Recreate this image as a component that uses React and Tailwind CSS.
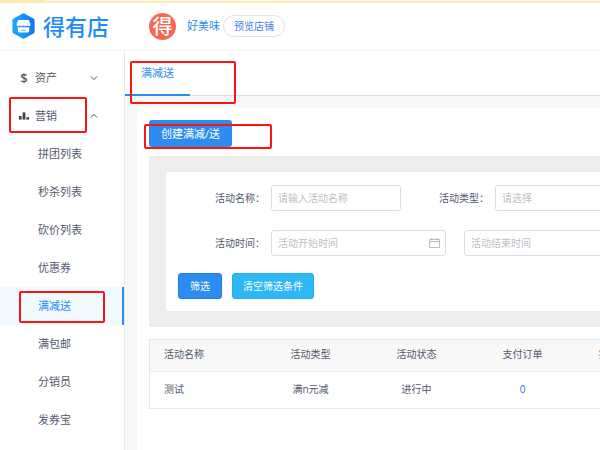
import React, { useState } from 'react';

const menu = ['拼团列表', '秒杀列表', '砍价列表', '优惠券', '满减送', '满包邮', '分销员', '发券宝'];

const columns = ['活动名称', '活动类型', '活动状态', '支付订单', '实付金额(元)', '操作'];

const rows = [
  { name: '测试', type: '满n元减', status: '进行中', orders: 0, amount: '0.00' }
];

const Logo = () => (
  <svg className="w-[23px] h-[26px]" viewBox="0 0 23 26" aria-hidden="true">
    <defs>
      <linearGradient id="hex" x1="0" y1="0" x2="1" y2="0">
        <stop offset="0" stopColor="#1fa5ff" />
        <stop offset="0.5" stopColor="#1a94fb" />
        <stop offset="1" stopColor="#1173f2" />
      </linearGradient>
    </defs>
    <path d="M10.2 0.7 Q11.5 0 12.8 0.7 L21.4 5.6 Q22.6 6.3 22.6 7.6 V18.400 Q22.6 19.7 21.4 20.4 L12.8 25.3 Q11.5 26 10.2 25.3 L1.6 20.4 Q0.4 19.7 0.4 18.400 V7.6 Q0.4 6.3 1.6 5.6 Z" fill="url(#hex)" />
    <path d="M7 7 H16 Q16.8 7 17.1 7.7 L18.4 11 Q18.6 13.2 16.9 13.2 Q15.7 13.2 15.1 12.2 Q14.500 13.2 13.3 13.2 Q12.1 13.2 11.5 12.2 Q10.9 13.2 9.7 13.2 Q8.500 13.2 7.9 12.2 Q7.300 13.2 6.1 13.2 Q4.400 13.2 4.600 11 L5.900 7.700 Q6.200 7 7 7 Z" fill="#fff" />
    <path d="M5.800 14.200 H17.200 V18 Q17.200 19.400 15.800 19.400 H7.200 Q5.800 19.400 5.800 18 Z" fill="#fff" />
    <path d="M9.200 17.300 H13.800" stroke="#5bb2fb" strokeWidth="1" />
  </svg>
);

const Avatar = () => (
  <svg className="w-[27px] h-[27px]" viewBox="0 0 27 27" aria-hidden="true">
    <circle cx="13.5" cy="13.5" r="13.5" fill="#fb6650" />
    <text x="13.5" y="21" textAnchor="middle" fontSize="20" fontWeight="500" fill="#fff">得</text>
  </svg>
);

const BarsIcon = () => (
  <svg className="w-[10px] h-[8px]" viewBox="0 0 10 8" fill="#3c4353" aria-hidden="true">
    <rect x="0" y="4" width="2.6" height="3.6" />
    <rect x="3.6" y="0.4" width="2.8" height="7.2" />
    <rect x="7.4" y="5.2" width="2.6" height="2.4" />
  </svg>
);

const Chevron = ({ up }) => (
  <svg className="w-[8px] h-[8px]" viewBox="0 0 8 8" fill="none" stroke="#4a5263" strokeWidth="1" aria-hidden="true">
    <path d={up ? 'M0.800 5.600 L4 2.400 L7.200 5.600' : 'M0.800 2.400 L4 5.600 L7.200 2.400'} />
  </svg>
);

const CalendarIcon = () => (
  <svg className="absolute right-[6px] top-[8px] w-[11px] h-[11px]" viewBox="0 0 11 11" fill="none" stroke="#a9afba" aria-hidden="true">
    <path d="M0.500 1.500 H10.500 V9.500 H0.500 Z M0.500 3.500 H10.500" strokeWidth="0.800" />
    <path d="M2.800 0 V2.200 M8.200 0 V2.200" strokeWidth="1" />
  </svg>
);

// red frame laid over a step the reader has to follow
const Mark = ({ className }) => (
  <span className={`absolute z-10 border-2 border-[#fd1310] rounded-[2px] pointer-events-none ${className}`} />
);

const field = 'block h-[26px] w-full rounded-[3px] border border-[#dcdee2] bg-white px-[6px] text-[10px] text-[#515a6e] placeholder:text-[#bcc0c8] outline-none focus:border-[#2d8cf0]';

const Sidebar = ({ active, onSelect }) => {
  const [open, setOpen] = useState(true);

  return (
    <nav className="w-[125px] shrink-0 border-r border-[#e6e8eb] bg-white pt-2 text-[11px]">
      <button type="button" className="flex h-[38px] w-full items-center pl-[19px] pr-[26px]">
        <span className="w-[10px] text-center text-[13px] font-semibold">$</span>
        <span className="ml-[6px] flex-1 text-left">资产</span>
        <Chevron />
      </button>
      <button
        type="button"
        aria-expanded={open}
        onClick={() => setOpen(!open)}
        className="relative flex h-[38px] w-full items-center pl-[19px] pr-[26px]"
      >
        <BarsIcon />
        <span className="ml-[6px] flex-1 text-left">营销</span>
        <Chevron up={open} />
        <Mark className="left-[9px] right-[37px] top-0 bottom-[2px]" />
      </button>
      {
        open && (
          <ul>
            {menu.map((item) => (
              <li key={item}>
                <a
                  href="#"
                  onClick={() => onSelect(item)}
                  className={
                    item === active
                      ? 'relative flex h-[38px] items-center border-r-2 border-[#2d8cf0] bg-[#f0faff] pl-[38px] text-[#2d8cf0]'
                      : 'flex h-[38px] items-center pl-[38px]'
                  }
                >
                  {item}
                  {item === active && <Mark className="left-[19px] right-[17px] top-1 bottom-[2px]" />}
                </a>
              </li>
            ))}
          </ul>
        )
      }
    </nav>
  );
};

const Filters = () => {
  const empty = { name: '', type: '', start: '', end: '' };
  const [input, setInput] = useState(empty);

  const changeHandler = (e) => {
    setInput({ ...input, [e.target.name]: e.target.value });
  };

  return (
    <div className="mt-[9px] bg-[#ededed] py-4 pl-[17px]">
      <form
        onSubmit={(e) => e.preventDefault()}
        className="rounded-[3px] bg-white pb-3 pl-3 pt-[13px] text-[10px]"
      >
        <div className="flex items-center">
          <label htmlFor="name" className="w-[93px] pr-[6px] text-right">活动名称：</label>
          <div className="w-[130px]">
            <input id="name" name="name" placeholder="请输入活动名称" value={input.name} onChange={changeHandler} className={field} />
          </div>
          <label htmlFor="type" className="w-[94px] pr-[6px] text-right">活动类型：</label>
          <div className="w-[175px]">
            <select id="type" name="type" value={input.type} onChange={changeHandler} className={`${field} appearance-none text-[#bcc0c8]`}>
              <option value="">请选择</option>
              <option value="n">满n元减</option>
            </select>
          </div>
        </div>

        <div className="mt-[19px] flex items-center">
          <label htmlFor="start" className="w-[93px] pr-[6px] text-right">活动时间：</label>
          <div className="relative w-[175px]">
            <input id="start" name="start" placeholder="活动开始时间" value={input.start} onChange={changeHandler} className={field} />
            <CalendarIcon />
          </div>
          <div className="relative ml-[18px] w-[175px]">
            <input name="end" aria-label="活动结束时间" placeholder="活动结束时间" value={input.end} onChange={changeHandler} className={field} />
            <CalendarIcon />
          </div>
        </div>

        <div className="mt-[17px] flex gap-[10px] text-white">
          <button type="submit" className="h-[26px] rounded-[3px] border border-[#1c7deb] bg-[#2d8cf0] px-[11px]">筛选</button>
          <button type="button" onClick={() => setInput(empty)} className="h-[26px] rounded-[3px] border border-[#22adf0] bg-[#2db7f5] px-[10px]">清空筛选条件</button>
        </div>
      </form>
    </div>
  );
};

const ActivityTable = () => (
  <table className="mt-3 w-full table-fixed border-collapse border border-[#e4e6ea] text-center text-[10px]">
    <colgroup>
      <col className="w-[108px]" />
      <col className="w-[106px]" />
      <col className="w-[106px]" />
      <col className="w-[106px]" />
      <col className="w-[102px]" />
      <col />
    </colgroup>
    <thead>
      <tr className="h-8 border-b border-[#e8eaec] bg-[#f8f8f9]">
        {columns.map((title) => (
          <th key={title} className="pb-[3px] font-normal first:pl-[14px] first:text-left">{title}</th>
        ))}
      </tr>
    </thead>
    <tbody>
      {rows.map((row) => (
        <tr key={row.name} className="h-[37px] *:pb-[3px]">
          <td className="pl-[14px] text-left">{row.name}</td>
          <td>{row.type}</td>
          <td>{row.status}</td>
          <td><a href="#" className="text-[#2d6cf0]">{row.orders}</a></td>
          <td>{row.amount}</td>
          <td><a href="#" className="text-[#2d6cf0]">编辑</a></td>
        </tr>
      ))}
    </tbody>
  </table>
);

const App = () => {
  const [active, setActive] = useState('满减送');

  return (
    <div className="flex min-h-screen flex-col overflow-hidden bg-white font-['Open_Sans','Noto_Sans_CJK_SC',sans-serif] leading-4 text-[#515a6e]">
      <div className="h-[3px] border-b-2 border-[#fdeebe] bg-[#fffbe0]">
        <div className="h-[3px] w-[45px] bg-[#fbe9ad]" />
      </div>

      <header className="flex h-12 items-center border-b-2 border-[#f8f8f9] pl-3">
        <Logo />
        <h1 className="ml-2 text-[22px] font-medium leading-6 text-[#1b8dfa]">得有店</h1>
        <div className="ml-10 flex items-center">
          <Avatar />
          <span className="ml-[11px] text-[11px] text-[#2d8cf0]">好美味</span>
          <button type="button" className="ml-[3px] h-[22px] rounded-full border border-[#dfe3ea] px-[10px] text-[10px] text-[#3f83ea]">预览店铺</button>
        </div>
      </header>

      <div className="flex flex-1">
        <Sidebar active={active} onSelect={setActive} />

        <main className="flex min-w-0 flex-1 flex-col overflow-hidden bg-[#f5f7f9]">
          <div className="relative flex h-[45px] border-b border-[#dcdee2] bg-white">
            <a href="#" className="h-[45px] border-b-2 border-[#2d8cf0] px-4 pt-[14px] text-[11px] text-[#2d8cf0]">{active}</a>
            <Mark className="left-[5px] top-[10px] h-[43px] w-[106px]" />
          </div>

          <section className="ml-3 mt-3 min-w-[760px] flex-1 rounded-tl-[4px] bg-white pl-3 pt-3">
            <div className="relative">
              <button type="button" className="block h-[27px] rounded-[3px] bg-[#2d8cf0] px-3 text-[11px] text-white">创建满减/送</button>
              <Mark className="-left-[5px] top-1 h-[25px] w-[128px]" />
            </div>
            <Filters />
            <ActivityTable />
          </section>
        </main>
      </div>
    </div>
  );
};

export default App;
